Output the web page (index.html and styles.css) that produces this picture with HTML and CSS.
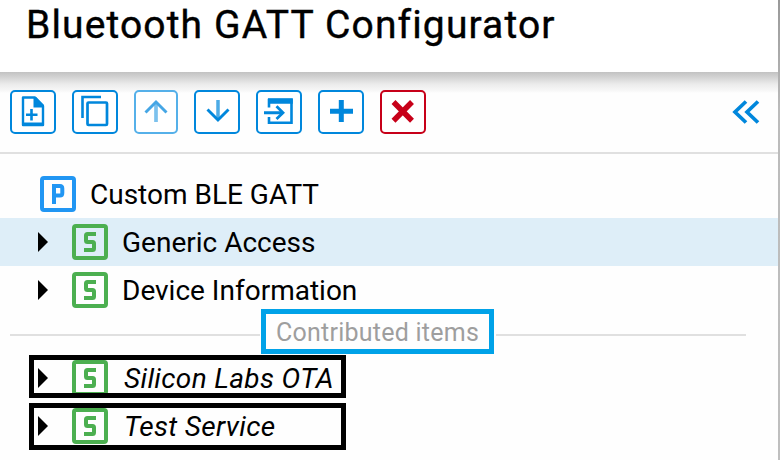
FILE: index.html
```html
<!DOCTYPE html>
<html lang="en">
<head>
<meta charset="utf-8">
<title>Bluetooth GATT Configurator</title>
<link rel="stylesheet" href="styles.css">
</head>
<body>
<main class="panel">
  <header class="header"><h1 class="title">Bluetooth GATT Configurator</h1></header>
  <div class="toolbar">
    <button class="btn" aria-label="New item"><svg viewBox="0 0 42 40"><path d="M11 5.500H23L31 14V33H11Z" fill="none" stroke="currentColor" stroke-width="2.400" stroke-linejoin="round"/><path d="M21.500 5H24L32 13V15.500H21.500Z" fill="currentColor"/><path d="M19.500 17V28.500M14 22.700H25.500" stroke="currentColor" stroke-width="2.600"/><path d="M10.500 30.500H32V33.500H10.500Z" fill="currentColor"/></svg></button>
    <button class="btn" aria-label="Copy"><svg viewBox="0 0 42 40"><path d="M8.500 26V5H27" fill="none" stroke="currentColor" stroke-width="2.600"/><rect x="13.500" y="10.500" width="19.500" height="22.500" rx="1" fill="none" stroke="currentColor" stroke-width="2.700"/></svg></button>
    <button class="btn btn-up" aria-label="Move up" disabled><svg viewBox="0 0 40 40"><path d="M20 30V11" fill="none" stroke="currentColor" stroke-width="3.700" opacity=".7"/><path d="M9.500 20.500L20 10L30.500 20.500" fill="none" stroke="currentColor" stroke-width="2.900"/></svg></button>
    <button class="btn" aria-label="Move down"><svg viewBox="0 0 42 40"><path d="M22 8V28" fill="none" stroke="currentColor" stroke-width="3.500" opacity=".7"/><path d="M11.500 17.500L22 28L32.500 17.500" fill="none" stroke="currentColor" stroke-width="2.900"/></svg></button>
    <button class="btn" aria-label="Import"><svg viewBox="0 0 42 40"><path d="M11 15.500V8H33.500V30.700H11V25" fill="none" stroke="currentColor" stroke-width="2.600"/><path d="M10 6.300H34.800V11.700H10ZM6 19.200H25V22.200H6Z" fill="currentColor"/><path d="M18.500 14.300L25 20.700L18.500 27.100" fill="none" stroke="currentColor" stroke-width="2.800"/></svg></button>
    <button class="btn" aria-label="Add"><svg viewBox="0 0 42 40"><path d="M21.300 8V30M10 19.300H33" stroke="currentColor" stroke-width="5"/></svg></button>
    <button class="btn btn-delete" aria-label="Delete"><svg viewBox="0 0 42 40"><path d="M11.500 10L30 28.800M30 10L11.500 28.800" stroke="currentColor" stroke-width="5.500"/></svg></button>
    <svg class="collapse" viewBox="0 0 28 24"><path d="M14 1.500L3 12L14 22.500M26 1.500L15 12L26 22.500" fill="none" stroke="currentColor" stroke-width="3.700"/></svg>
  </div>
  <section class="tree">
    <div class="row root"><span class="badge profile"><svg viewBox="0 0 28 28"><path d="M10 24V6H16Q18.300 6 18.300 8.500V13Q18.300 15.500 16 15.500H10" fill="none" stroke="currentColor" stroke-width="4"/></svg></span><span class="label">Custom BLE GATT</span></div>
    <div class="row selected"><i class="arrow"></i><span class="badge"><svg viewBox="0 0 28 28"><path d="M20 6H11.500Q10 6 10 7.500V12.500Q10 14 11.500 14H16.500Q18 14 18 15.500V20.500Q18 22 16.500 22H8" fill="none" stroke="currentColor" stroke-width="4"/></svg></span><span class="label">Generic Access</span></div>
    <div class="row"><i class="arrow"></i><span class="badge"><svg viewBox="0 0 28 28"><path d="M20 6H11.500Q10 6 10 7.500V12.500Q10 14 11.500 14H16.500Q18 14 18 15.500V20.500Q18 22 16.500 22H8" fill="none" stroke="currentColor" stroke-width="4"/></svg></span><span class="label">Device Information</span></div>
    <div class="divider"><span class="divider-label">Contributed items</span></div>
    <div class="row contributed first"><i class="arrow"></i><span class="badge"><svg viewBox="0 0 28 28"><path d="M20 6H11.500Q10 6 10 7.500V12.500Q10 14 11.500 14H16.500Q18 14 18 15.500V20.500Q18 22 16.500 22H8" fill="none" stroke="currentColor" stroke-width="4"/></svg></span><span class="label">Silicon Labs OTA</span></div>
    <div class="row contributed second"><i class="arrow"></i><span class="badge"><svg viewBox="0 0 28 28"><path d="M20 6H11.500Q10 6 10 7.500V12.500Q10 14 11.500 14H16.500Q18 14 18 15.500V20.500Q18 22 16.500 22H8" fill="none" stroke="currentColor" stroke-width="4"/></svg></span><span class="label">Test Service</span></div>
  </section>
</main>
</body>
</html>
```
FILE: styles.css
```css
*, *::before, *::after { box-sizing: border-box; }
body { margin: 0; background: #fff; font-family: Roboto, "Liberation Sans", sans-serif; color: #000; }
.panel { position: relative; width: 780px; height: 460px; overflow: hidden; background: #fefefe; }
.panel::after { content: ""; position: absolute; top: 0; right: 0; width: 2px; height: 460px; background: linear-gradient(#999, #bbb 110px, #bfbfbf); }
.header { height: 72px; padding: 1px 0 0 26px; background: #fff; }
.title { margin: 0; font-size: 39px; line-height: 48px; font-weight: 400; letter-spacing: 1.13px; white-space: nowrap; -webkit-text-stroke: .4px #000; }
.toolbar { display: flex; align-items: center; gap: 16px; height: 82px; padding: 0 20px 0 10px; border-bottom: 2px solid #e0e0e0; background: linear-gradient(#c2c2c2, #d9d9d9 7px, #ebebeb 12px, #f8f8f8 19px, #fefefe 21px); }
.btn { width: 46px; height: 44px; padding: 0; border: 2px solid #0087dc; border-radius: 5px; background: #fff; color: #0087dc; }
.btn svg, .badge svg { display: block; width: 100%; height: 100%; }
.btn-up { width: 44px; border-color: #55b0e9; color: #45a6e5; }
.btn-delete { border-color: #c70019; color: #c70019; }
.collapse { width: 28px; height: 24px; margin-left: auto; color: #0087dc; }
.tree { padding-top: 16px; }
.row { position: relative; display: flex; align-items: center; height: 48px; padding-left: 38px; font-size: 28px; white-space: nowrap; }
.root { padding-left: 40px; }
.selected { background: #deeef8; }
.arrow { width: 10px; height: 20px; margin-right: 24px; background: #000; clip-path: polygon(0 0, 10px 10px, 0 20px); }
.badge { flex: none; width: 36px; height: 36px; border: 4px solid #4caf50; border-radius: 4px; color: #4caf50; }
.profile { border-color: #2196f3; color: #2196f3; }
.label { margin-left: 14px; padding-top: 1px; line-height: 48px; }
.divider { display: flex; align-items: center; gap: 2px; height: 40px; padding: 0 34px 0 10px; }
.divider::before, .divider::after { content: ""; flex: 0 0 250px; height: 2px; background: #e0e0e0; margin-top: 2px; }
.divider::before { margin-right: -1px; }
.divider::after { flex: 1; }
.divider-label { display: flex; flex: none; align-items: center; justify-content: center; width: 233px; height: 45px; margin-top: -5px; border: 5px solid #00a2e8; color: #9e9e9e; font-size: 25px; letter-spacing: .25px; white-space: nowrap; padding-top: 2px; }
.contributed { font-style: italic; }
.contributed .label { margin-left: 16px; letter-spacing: .34px; }
.contributed::after { content: ""; position: absolute; left: 29px; top: 1px; width: 317px; height: 43px; border: 5px solid #000; }
.second::after { height: 47px; }
```
